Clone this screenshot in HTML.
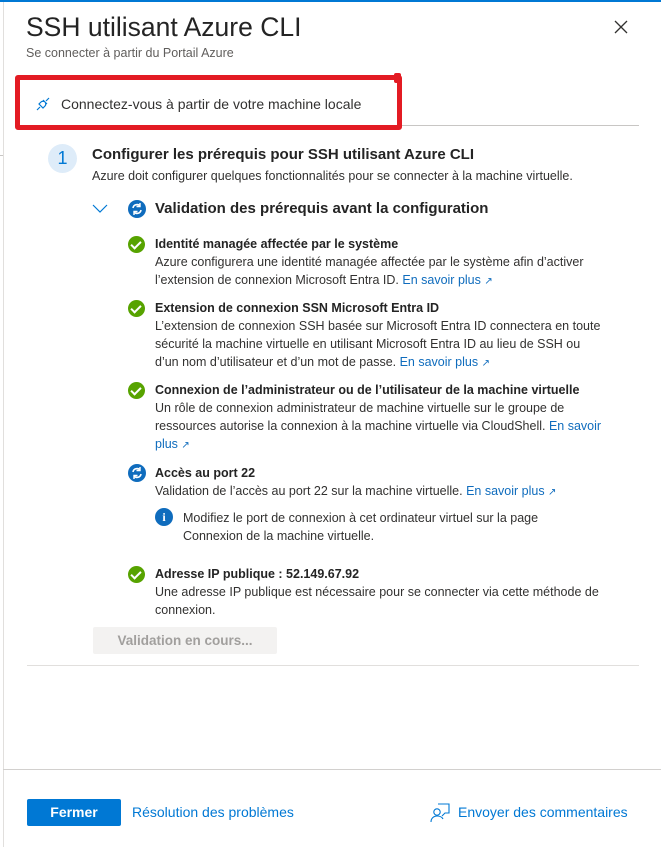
<!DOCTYPE html>
<html><head><meta charset="utf-8"><style>
*{margin:0;padding:0;box-sizing:border-box}
body{width:661px;height:847px;background:#fff;font-family:"Liberation Sans",sans-serif;color:#323130;position:relative;overflow:hidden}
.a{position:absolute;white-space:nowrap}
.t{font-size:12.5px;line-height:18px}
.b{font-weight:bold}
.l{color:#0f6cbd}
.chk{position:absolute;width:17px;height:17px;border-radius:50%;background:#57a300}
.chk:after{content:"";position:absolute;left:5px;top:3px;width:4px;height:8px;border:solid #fff;border-width:0 2px 2px 0;transform:rotate(45deg)}
.ext{font-size:10px}
</style></head><body>
<div class="a" style="left:0;top:0;width:661px;height:2px;background:#0078d4"></div>
<div class="a" style="left:3px;top:2px;width:1px;height:845px;background:#e1dfdd"></div>
<div class="a" style="left:0;top:155px;width:3px;height:1px;background:#c8c6c4"></div>
<div class="a" style="left:26px;top:12px;font-size:26.5px;color:#242424">SSH utilisant Azure CLI</div>
<svg class="a" style="left:614px;top:20px" width="14" height="14" viewBox="0 0 14 14"><path d="M1 1L13 13M13 1L1 13" stroke="#323130" stroke-width="1.3"/></svg>
<div class="a" style="left:26px;top:46px;font-size:12.5px;color:#605e5c">Se connecter à partir du Portail Azure</div>
<div class="a" style="left:17px;top:125px;width:622px;height:1px;background:#c8c6c4"></div>
<div class="a" style="left:15px;top:75px;width:387px;height:55px;border:5px solid #e31b23;border-radius:3px;background:transparent"></div>
<div class="a" style="left:394px;top:73px;width:7px;height:10px;background:#e31b23;border-radius:2px"></div>
<svg class="a" style="left:35px;top:96px" width="16" height="16" viewBox="0 0 16 16"><path d="M2 14L5 11M14 2L11 5M4 8l4 4 2-2c1-1 1-3 0-4s-3-1-4 0zM8 4l4 4" stroke="#0078d4" stroke-width="1.2" fill="none"/></svg>
<div class="a" style="left:61px;top:96px;font-size:14px;color:#323130">Connectez-vous à partir de votre machine locale</div>
<div class="a" style="left:48px;top:144px;width:29px;height:29px;border-radius:50%;background:#deecf9;color:#0078d4;font-size:18px;text-align:center;line-height:29px">1</div>
<div class="a b" style="left:92px;top:146px;font-size:15px;color:#242424">Configurer les prérequis pour SSH utilisant Azure CLI</div>
<div class="a t" style="left:92px;top:167px">Azure doit configurer quelques fonctionnalités pour se connecter à la machine virtuelle.</div>
<svg class="a" style="left:92px;top:204px" width="16" height="10" viewBox="0 0 16 10"><path d="M1 1l7 7 7-7" stroke="#0078d4" stroke-width="1.2" fill="none"/></svg>
<svg class="a" style="left:128px;top:200px" width="18" height="18" viewBox="0 0 18 18"><circle cx="9" cy="9" r="9" fill="#0f6cbd"/><path d="M5 8a4 4 0 0 1 7-2M13 10a4 4 0 0 1-7 2" stroke="#fff" stroke-width="1.6" fill="none"/><path d="M12 3v3.5H8.5M6 15v-3.5h3.5" stroke="#fff" stroke-width="1.4" fill="none"/></svg>
<div class="a b" style="left:155px;top:200px;font-size:15px;color:#242424">Validation des prérequis avant la configuration</div>

<div class="chk" style="left:128px;top:236px"></div>
<div class="a t b" style="left:155px;top:235px;color:#242424">Identité managée affectée par le système</div>
<div class="a t" style="left:155px;top:253px">Azure configurera une identité managée affectée par le système afin d’activer</div>
<div class="a t" style="left:155px;top:271px">l’extension de connexion Microsoft Entra ID. <span class="l">En savoir plus <span class="ext">↗</span></span></div>

<div class="chk" style="left:128px;top:300px"></div>
<div class="a t b" style="left:155px;top:299px;color:#242424">Extension de connexion SSN Microsoft Entra ID</div>
<div class="a t" style="left:155px;top:317px">L’extension de connexion SSH basée sur Microsoft Entra ID connectera en toute</div>
<div class="a t" style="left:155px;top:335px">sécurité la machine virtuelle en utilisant Microsoft Entra ID au lieu de SSH ou</div>
<div class="a t" style="left:155px;top:353px">d’un nom d’utilisateur et d’un mot de passe. <span class="l">En savoir plus <span class="ext">↗</span></span></div>

<div class="chk" style="left:128px;top:382px"></div>
<div class="a t b" style="left:155px;top:381px;color:#242424">Connexion de l’administrateur ou de l’utilisateur de la machine virtuelle</div>
<div class="a t" style="left:155px;top:399px">Un rôle de connexion administrateur de machine virtuelle sur le groupe de</div>
<div class="a t" style="left:155px;top:417px">ressources autorise la connexion à la machine virtuelle via CloudShell. <span class="l">En savoir</span></div>
<div class="a t l" style="left:155px;top:435px">plus <span class="ext">↗</span></div>

<svg class="a" style="left:128px;top:464px" width="18" height="18" viewBox="0 0 18 18"><circle cx="9" cy="9" r="9" fill="#0f6cbd"/><path d="M5 8a4 4 0 0 1 7-2M13 10a4 4 0 0 1-7 2" stroke="#fff" stroke-width="1.6" fill="none"/><path d="M12 3v3.5H8.5M6 15v-3.5h3.5" stroke="#fff" stroke-width="1.4" fill="none"/></svg>
<div class="a t b" style="left:155px;top:464px;color:#242424">Accès au port 22</div>
<div class="a t" style="left:155px;top:482px">Validation de l’accès au port 22 sur la machine virtuelle. <span class="l">En savoir plus <span class="ext">↗</span></span></div>
<div class="a" style="left:155px;top:508px;width:18px;height:18px;border-radius:50%;background:#0f6cbd;color:#fff;font:bold 12px/18px 'Liberation Serif',serif;text-align:center">i</div>
<div class="a t" style="left:183px;top:509px">Modifiez le port de connexion à cet ordinateur virtuel sur la page</div>
<div class="a t" style="left:183px;top:527px">Connexion de la machine virtuelle.</div>

<div class="chk" style="left:128px;top:566px"></div>
<div class="a t b" style="left:155px;top:565px;color:#242424">Adresse IP publique : 52.149.67.92</div>
<div class="a t" style="left:155px;top:583px">Une adresse IP publique est nécessaire pour se connecter via cette méthode de</div>
<div class="a t" style="left:155px;top:601px">connexion.</div>

<div class="a" style="left:93px;top:627px;width:184px;height:27px;background:#f3f2f1;border-radius:2px;color:#a19f9d;font-size:13.5px;font-weight:bold;text-align:center;line-height:27px">Validation en cours...</div>
<div class="a" style="left:27px;top:665px;width:612px;height:1px;background:#e1dfdd"></div>
<div class="a" style="left:3px;top:769px;width:658px;height:1px;background:#d2d0ce"></div>
<div class="a" style="left:27px;top:799px;width:94px;height:27px;background:#0078d4;border-radius:2px;color:#fff;font-size:14px;font-weight:bold;text-align:center;line-height:27px">Fermer</div>
<div class="a l" style="left:132px;top:804px;font-size:14px;color:#0078d4">Résolution des problèmes</div>
<svg class="a" style="left:430px;top:803px" width="20" height="20" viewBox="0 0 20 20"><path d="M8 1h11v9h-4l-3 3" stroke="#0078d4" stroke-width="1.1" fill="none"/><circle cx="7" cy="9" r="3.2" stroke="#0078d4" stroke-width="1.1" fill="none"/><path d="M1 19c0-4 3-6 6-6s5 1 6 3" stroke="#0078d4" stroke-width="1.1" fill="none"/></svg>
<div class="a" style="left:458px;top:804px;font-size:14px;color:#0078d4">Envoyer des commentaires</div>
</body></html>
